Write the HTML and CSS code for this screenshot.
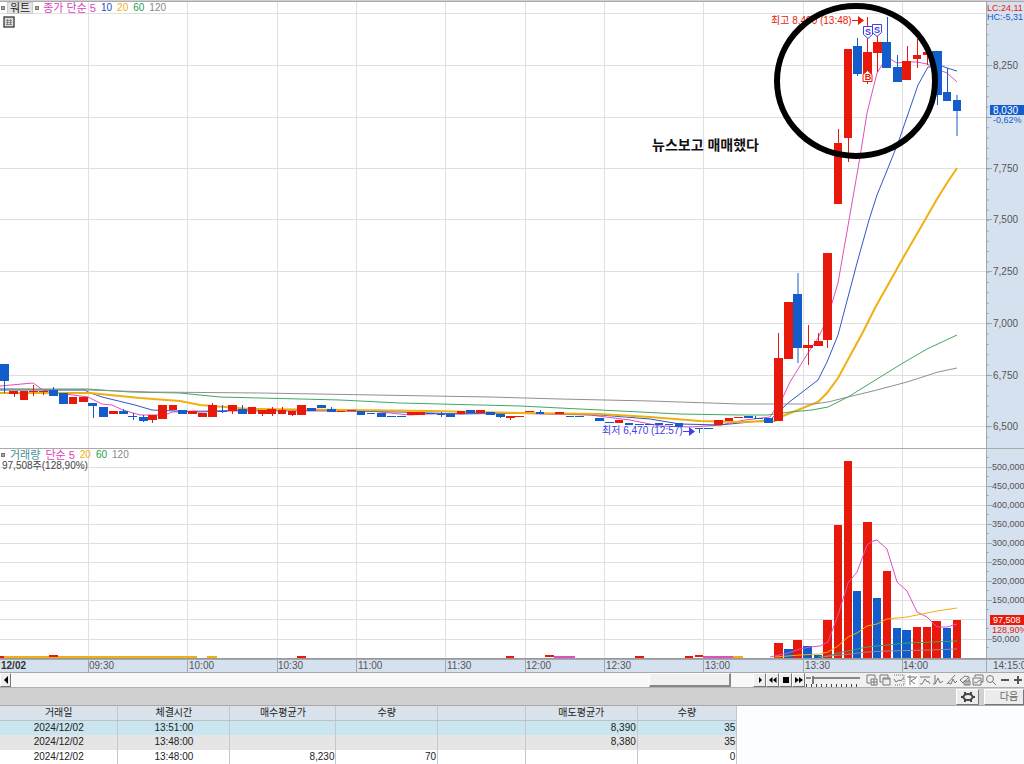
FILE: index.html
```html
<!DOCTYPE html>
<html lang="ko">
<head>
<meta charset="utf-8">
<title>워트 차트</title>
<link rel="stylesheet" href="styles.css">
</head>
<body>
<main class="app">
  <section class="panel price" aria-label="가격 차트">
    <div class="legend">
      <div class="legend-row">
        <i class="mark"></i><button class="symbol" type="button">워트</button><i class="mark"></i>
        <span class="pink">종가 단순 5</span><span class="navy">10</span><span class="gold">20</span><span class="green">60</span><span class="gray">120</span>
      </div>
      <button class="grid-button" type="button" aria-label="표 보기">
        <svg viewBox="0 0 12 12"><rect x="1" y="1" width="10" height="10" fill="#ddd" stroke="#444" stroke-width="1.4"/><path d="M3 4.5h6M3 6.5h6M3 8.5h6M4.5 3v6M7.5 3v6" stroke="#777" stroke-width=".8"/></svg>
      </button>
    </div>
    <svg class="plot" viewBox="0 0 1024 449">
      <rect width="1024" height="449" fill="#fff"/>
      <path class="grid" d="M0 13.5H986M0 65.500H986M0 117.500H986M0 168.500H986M0 219.500H986M0 271.500H986M0 323.500H986M0 375.500H986M0 426.500H986M88.500 2V449M187.500 2V449M277.500 2V449M356.500 2V449M445.500 2V449M525.500 2V449M604.500 2V449M703.500 2V449M803.500 2V449M902.500 2V449"/>
      <rect x="986" width="38" height="449" fill="#d6e1f0"/>
      <path class="axis" d="M986.500 2V449M987 65.500h5M987 117.500h5M987 168.500h5M987 219.500h5M987 271.500h5M987 323.500h5M987 375.500h5M987 426.500h5"/>
      <path d="M987.500 24V447" stroke="#999" stroke-width="2" stroke-dasharray="1 9.320"/>
      <polyline class="line s-pink" points="0,386 33,383 43,390 58,393 88,397 102,404 112,405 123,410 140,415 165,415 172,412 195,411 240,411 300,411 370,411 390,413 410,415 428,414 500,413 590,415 630,420 660,426 690,427 720,425 745,420 770,417 783,397 790,382 808,353 818,338 823,328 832,303 838,283 849,220 860,157 867,113 877,73 885,60 892,60 897,63 907,62 917,62 927,64 942,71 947,73 957,82"/>
      <polyline class="line s-navy" points="0,390 85,390 88,392 102,397 135,405 152,410 200,412 240,410 300,410 400,412 460,414 520,413 600,415 650,419 680,424 720,425 770,420 788,403 818,380 827,362 838,335 857,263 869,220 877,195 888,168 898,143 907,117 918,85 928,67 942,66 947,68 957,71"/>
      <polyline class="line s-gold thick" points="0,393 90,393 140,398 180,401 200,405 250,409 350,410 430,411 520,413 600,414 650,417 700,421 740,422 775,421 783,416 818,402 827,393 838,378 863,332 875,308 903,258 925,220 937,199 947,183 957,168"/>
      <polyline class="line s-green" points="0,389 88,389 130,392 180,393 220,397 260,398 340,400 400,403 480,405 520,406 580,409 640,412 680,414 740,415 768,415 790,412 812,410 828,407 848,397 877,379 903,363 927,349 957,335"/>
      <polyline class="line s-gray" points="0,389 88,390 150,392 260,393 375,395 490,397 560,399 650,401 740,404 800,404 813,404 828,402 848,397 873,391 907,382 938,372 957,368"/>
      <path class="up-wick" d="M14.500 391V397M33.500 385V396M43.500 391V395M152.500 415V423M212.500 403V416M232.500 405V414M262.500 410V416M272.500 407V416M282.500 407V414M292.500 411V416M510.500 416V420M778.500 333V420M808.500 325V365M818.500 333V346M827.500 253V348M838.500 129V203M848.500 49V162M867.500 17V84M877.500 36V72M907.500 46V80M917.500 39V68M927.500 50V65"/>
      <path class="down-wick" d="M4.500 365V393M53.500 387V395M93.500 403V418M123.500 409V414M133.500 413V420M143.500 415V422M222.500 405V413M242.500 405V414M331.500 407V412M441.500 412V417M500.500 414V418M540.500 410V414M699.500 428V433M755.500 416V418M798 273V363M857.500 38V76M887.500 17V68M897.500 55V82M937.500 51V105M947.500 68V101M957 95V136"/>
      <path class="up" d="M9 391h9v3h-9zM20 391h8v9h-8zM29 391h9v1h-9zM39 391h9v1h-9zM69 397h8v7h-8zM79 397h9v5h-9zM109 411h9v3h-9zM148 415h9v5h-9zM158 405h9v14h-9zM169 405h8v5h-8zM188 411h9v3h-9zM198 413h9v4h-9zM208 405h9v12h-9zM228 405h9v6h-9zM248 407h8v7h-8zM258 410h9v4h-9zM267 409h9v5h-9zM278 410h8v4h-8zM288 411h8v4h-8zM297 405h9v10h-9zM337 411h8v1h-8zM347 410h9v1h-9zM407 412h9v3h-9zM416 412h9v3h-9zM457 411h8v3h-8zM476 410h9v3h-9zM506 416h9v2h-9zM515 416h9v1h-9zM525 411h9v1h-9zM555 412h9v2h-9zM615 420h8v3h-8zM714 420h9v5h-9zM725 418h8v3h-8zM734 417h9v1h-9zM774 358h9v63h-9zM784 302h9v57h-9zM803 345h10v3h-10zM814 341h9v5h-9zM823 253h9v87h-9zM834 143h8v61h-8zM844 49h8v89h-8zM863 52h9v23h-9zM873 42h9v11h-9zM902 61h9v19h-9zM913 55h8v4h-8zM923 52h8v3h-8z"/>
      <path class="down" d="M0 364h9v17h-9zM49 390h9v6h-9zM59 393h9v11h-9zM88 403h9v3h-9zM99 407h9v10h-9zM119 411h9v3h-9zM128 416h9v1h-9zM139 417h9v4h-9zM178 410h9v4h-9zM218 411h9v1h-9zM238 409h9v5h-9zM307 408h9v3h-9zM317 405h9v3h-9zM327 409h9v3h-9zM357 411h8v4h-8zM367 413h8v1h-8zM377 413h9v4h-9zM387 416h9v1h-9zM397 416h9v1h-9zM426 413h9v1h-9zM437 414h8v1h-8zM446 414h9v3h-9zM466 410h9v3h-9zM486 412h9v3h-9zM496 414h9v3h-9zM536 412h8v2h-8zM566 416h8v1h-8zM575 416h9v1h-9zM595 418h9v3h-9zM605 422h9v1h-9zM625 423h8v2h-8zM635 424h9v1h-9zM645 424h9v1h-9zM655 423h8v2h-8zM665 424h8v1h-8zM675 423h8v4h-8zM695 428h8v1h-8zM704 428h9v1h-9zM744 416h9v2h-9zM754 418h9v1h-9zM764 418h9v5h-9zM793 294h9v54h-9zM853 46h9v28h-9zM882 42h9v26h-9zM893 67h9v15h-9zM932 51h10v44h-10zM943 92h8v9h-8zM953 100h8v11h-8z"/>
      <text class="red" x="771" y="24">최고 8,490 (13:48)</text>
      <path d="M852 20.500h8" stroke="#e8190a"/><path d="M858 16l6 4.500-6 4.500z" fill="#e8190a"/>
      <g fill="#fff" stroke="#4040e8"><path d="M863.500 26.500h9v8l-4.500 4-4.500-4zM872.500 24.500h9v8l-4.500 4-4.500-4z"/></g>
      <path d="M867.500 70.500l4.500 4v7h-9v-7z" fill="#fff" stroke="#e8190a"/>
      <g class="flag"><text x="868" y="35">S</text><text x="877" y="33">S</text><text class="red" x="868" y="80">B</text></g>
      <ellipse cx="856" cy="81" rx="79" ry="75" fill="none" stroke="#000" stroke-width="6"/>
      <text class="blue" x="602" y="434">최저 6,470 (12:57)</text>
      <path d="M683 431.500h7" stroke="#4040e8"/><path d="M689 427l6 4.500-6 4.500z" fill="#4040e8"/>
      <text class="note" x="652" y="150">뉴스보고 매매했다</text>
      <g class="ticks"><text x="993" y="69">8,250</text><text x="993" y="172">7,750</text><text x="993" y="223">7,500</text><text x="993" y="275">7,250</text><text x="993" y="327">7,000</text><text x="993" y="379">6,750</text><text x="993" y="430">6,500</text></g>
      <g class="small"><text class="red" x="987" y="11">LC:24,11</text><text class="fall" x="987" y="20">HC:-5,31</text></g>
      <rect x="990" y="105" width="34" height="10" fill="#125ccc"/><text class="on" x="993" y="114">8,030</text><g class="small"><text class="fall" x="993" y="123">-0,62%</text></g>
      <path d="M0 448.500H1024" stroke="#aaa"/><path d="M0 .5H1024" stroke="#d0d0d0" stroke-width="2"/><path d="M0 1.500H1024" stroke="#aaa"/>
    </svg>
  </section>

  <section class="panel volume" aria-label="거래량 차트">
    <div class="legend">
      <div class="legend-row">
        <i class="mark"></i><span class="teal">거래량</span><span class="pink">단순 5</span><span class="gold">20</span><span class="green">60</span><span class="gray">120</span>
      </div>
      <div class="amount">97,508주(128,90%)</div>
    </div>
    <svg class="plot" viewBox="0 449 1024 210">
      <rect y="449" width="1024" height="210" fill="#fff"/>
      <path class="grid" d="M0 467.500H986M0 486.500H986M0 505.500H986M0 524.500H986M0 543.500H986M0 562.500H986M0 581.500H986M0 600.500H986M0 619.500H986M0 639.500H986M88.500 449V658M187.500 449V658M277.500 449V658M356.500 449V658M445.500 449V658M525.500 449V658M604.500 449V658M703.500 449V658M803.500 449V658M902.500 449V658"/>
      <rect x="986" y="449" width="38" height="210" fill="#d6e1f0"/>
      <path class="axis" d="M986.500 449V659M987 467.500h5M987 486.500h5M987 505.500h5M987 524.500h5M987 543.500h5M987 562.500h5M987 581.500h5M987 600.500h5M987 639.500h5"/>
      <path d="M987.500 457V655" stroke="#999" stroke-width="2" stroke-dasharray="1 18"/>
      <path d="M0 658.500H1024" stroke="#999"/>
      <path class="base s-gold" d="M0 657H197M207 657H217M733 657H743"/>
      <path class="base s-red" d="M0 657H4M49 656h9M297 657h9M506 657h8M545 656h9M635 657h9M685 657h8M695 656h8"/>
      <path class="base s-pink" d="M554 657H575M703 657H733"/>
      <path class="up" d="M774 643h9v15h-9zM793 640h9v18h-9zM823 620h9v38h-9zM834 525h8v133h-8zM844 461h8v197h-8zM863 522h9v136h-9zM883 571h8v87h-8zM913 627h8v31h-8zM923 627h8v31h-8zM932 621h9v37h-9zM953 620h8v38h-8z"/>
      <path class="down" d="M784 649h9v9h-9zM803 646h9v12h-9zM814 655h8v3h-8zM853 591h8v67h-8zM873 598h8v60h-8zM893 628h8v30h-8zM902 630h9v28h-9zM943 628h8v30h-8z"/>
      <polyline class="line s-pink" points="770,657 788,653 800,649 810,647 820,646 828,642 838,615 848,583 857,572 867,545 873,541 877,540 887,549 897,582 907,591 917,612 927,617 937,627 947,627 957,624"/>
      <polyline class="line s-gold" points="775,657 800,655 820,654 828,652 838,646 848,637 857,633 867,626 877,624 887,619 907,617 922,614 937,611 957,608"/>
      <polyline class="line s-green" points="818,657 828,656 838,653 848,651 867,647 887,645 907,643 932,642 957,641"/>
      <polyline class="line s-gray" points="820,657 840,655 867,652 887,651 930,650 957,649"/>
      <g class="ticks small"><text x="992" y="470">500,000</text><text x="992" y="489">450,000</text><text x="992" y="508">400,000</text><text x="992" y="527">350,000</text><text x="992" y="546">300,000</text><text x="992" y="565">250,000</text><text x="992" y="584">200,000</text><text x="992" y="603">150,000</text><text x="992" y="642">50,000</text></g>
      <rect x="990" y="615" width="34" height="10" fill="#e8190a"/><g class="small"><text class="on" x="993" y="623">97,508</text><text class="red" x="992" y="633">128,90%</text></g>
    </svg>
  </section>

  <svg class="plot" viewBox="0 659 1024 14" aria-label="시간축">
    <rect y="659" width="1024" height="14" fill="#d6e1f0"/>
    <path class="axis" d="M88.500 660V673M187.500 660V673M277.500 660V673M356.500 660V673M445.500 660V673M525.500 660V673M604.500 660V673M703.500 660V673M803.500 660V673M902.500 660V673M986.500 660V673M0 659.500H1024M0 672.500H1024"/>
    <g class="ticks"><text class="date" x="1" y="669">12/02</text><text x="89" y="669">09:30</text><text x="189" y="669">10:00</text><text x="278" y="669">10:30</text><text x="358" y="669">11:00</text><text x="447" y="669">11:30</text><text x="526" y="669">12:00</text><text x="606" y="669">12:30</text><text x="705" y="669">13:00</text><text x="805" y="669">13:30</text><text x="903" y="669">14:00</text><text x="993" y="669">14:15:00</text></g>
  </svg>

  <div class="controls">
    <button class="key" type="button" aria-label="왼쪽으로"><svg viewBox="0 0 12 12"><path d="M8 2v8L4 6z"/></svg></button>
    <div class="track"><div class="thumb"></div></div>
    <button class="key" type="button" aria-label="오른쪽으로"><svg viewBox="0 0 12 12"><path d="M5 3v6l3-3z"/></svg></button>
    <button class="key" type="button" aria-label="뒤로"><svg viewBox="0 0 12 12"><path d="M5.500 3v6L2 6zM9.500 3v6L6 6z"/></svg></button>
    <button class="key" type="button" aria-label="정지"><svg viewBox="0 0 12 12"><path d="M3 3h6v6H3z"/></svg></button>
    <button class="key" type="button" aria-label="앞으로"><svg viewBox="0 0 12 12"><path d="M2 3v6l4-3zM6 3v6l4-3z"/></svg></button>
    <input class="speed" type="range" min="0" max="10" value="1" aria-label="속도">
    <div class="tools">
      <button type="button" aria-label="차트 추가"><svg viewBox="0 0 12 12"><path d="M4 9H1V1h8v3M5 5h6v6H5zM8 5v6M5 8h6"/></svg></button>
      <button type="button" aria-label="창 복사"><svg viewBox="0 0 12 12"><path d="M3 8H1V1h8v3M4 4h7v7H4zM4 5h7"/></svg></button>
      <button type="button" aria-label="영역"><svg viewBox="0 0 12 12"><path d="M1 1h10v10H1" stroke-dasharray="1 1"/><path d="M1 5l2 3 3-2 2 1 3-4"/></svg></button>
      <button class="on-tool" type="button" aria-label="추세"><svg viewBox="0 0 12 12"><path d="M1 3h10M4 1v10M10 4L5 7l4 3"/></svg></button>
      <button type="button" aria-label="수평선"><svg viewBox="0 0 12 12"><path d="M1 3h10M1 10h2l3-5 2 3 1-1 2 3"/></svg></button>
      <button type="button" aria-label="수직선"><svg viewBox="0 0 12 12"><path d="M3 1v9M1 10h2l3-6 2 5 3-2"/></svg></button>
      <button type="button" aria-label="추세선"><svg viewBox="0 0 12 12"><path d="M1 10L9 1M2 9l3 1 2-5 2 4 2-2"/></svg></button>
      <button type="button" aria-label="지우기"><svg viewBox="0 0 12 12"><path d="M1 6l5-4 4 1v4M1 6l3 3 5-5M5 7h6v4H5zM7 7v4M9 7v4"/></svg></button>
      <button type="button" aria-label="겹쳐보기"><svg viewBox="0 0 12 12"><path d="M3 3V1h8v7H9M1 4h8v7H1zM2 8l2 1 4-3"/></svg></button>
      <button type="button" aria-label="돋보기"><svg viewBox="0 0 12 12"><circle cx="5" cy="5" r="3.500"/><path d="M7.500 7.500L11 11"/></svg></button>
      <button type="button" aria-label="축소"><svg viewBox="0 0 12 12"><path d="M2 6h8" stroke="#555" stroke-width="2"/></svg></button>
      <button type="button" aria-label="확대"><svg viewBox="0 0 12 12"><path d="M2 6h8M6 2v8" stroke="#555" stroke-width="2"/></svg></button>
    </div>
  </div>

  <div class="actions">
    <button class="action gear" type="button" aria-label="설정"><svg viewBox="0 0 16 12"><ellipse cx="8" cy="6" rx="4.500" ry="3" fill="none" stroke="#444" stroke-width="2"/><path d="M5 1v2M11 1v2M5 9v2M11 9v2M1 6h2M13 6h2" stroke="#444" stroke-width="2"/></svg></button>
    <button class="action next" type="button">다음</button>
  </div>

  <div class="trades">
    <table>
      <colgroup><col class="c-date"><col class="c-time"><col class="c-buy"><col class="c-qty"><col class="c-gap"><col class="c-time"><col class="c-last"></colgroup>
      <thead><tr><th>거래일</th><th>체결시간</th><th>매수평균가</th><th>수량</th><th></th><th>매도평균가</th><th>수량</th></tr></thead>
      <tbody>
        <tr class="selected"><td class="mid">2024/12/02</td><td class="mid">13:51:00</td><td></td><td></td><td></td><td>8,390</td><td>35</td></tr>
        <tr class="alt"><td class="mid">2024/12/02</td><td class="mid">13:48:00</td><td></td><td></td><td></td><td>8,380</td><td>35</td></tr>
        <tr><td class="mid">2024/12/02</td><td class="mid">13:48:00</td><td>8,230</td><td>70</td><td></td><td></td><td>0</td></tr>
      </tbody>
    </table>
  </div>
</main>
</body>
</html>
```

FILE: styles.css
```css
* { box-sizing: border-box; }
body {
  margin: 0;
  background: #fff;
  color: #222;
  font: 10px/12px "Liberation Sans", "Noto Sans CJK KR", sans-serif;
}
button { font: inherit; color: inherit; padding: 0; cursor: pointer; }
.app { display: flex; flex-direction: column; height: 100vh; overflow: hidden; }
.panel { position: relative; flex: none; }
.plot { display: block; flex: none; width: 100%; height: auto; }
.plot text { font-size: 10px; fill: #555; }
.plot .small text { font-size: 9px; }

.legend { position: absolute; left: 1px; top: 2px; }
.volume .legend { top: 0; }
.legend-row { display: flex; align-items: center; gap: 5px; height: 12px; }
.mark { width: 4px; height: 4px; border: 1px solid #777; background: #aaa; margin-right: -3px; }
.volume .mark { margin-right: 0; }
.symbol { height: 12px; padding: 0 2px; border: 1px solid #ccc; background: #e4e4e4; line-height: 10px; margin-right: -3px; }
.legend-row .pink, .teal, .symbol { font-size: 11px; }
.price .pink { margin-left: 2px; }
.grid-button { display: block; width: 12px; height: 12px; margin: 2px 0 0 2px; border: 0; background: none; }
.grid-button svg { display: block; }
.amount { color: #444; height: 10px; line-height: 10px; margin-left: 1px; }

.pink { color: #e040c0; }
.navy { color: #2848c0; }
.gold { color: #f0b010; }
.green { color: #20a050; }
.gray { color: #888; }
.teal { color: #409098; }

.grid { stroke: #e0e0e0; }
.axis { stroke: #a4a8b0; }
.up { fill: #e8190a; }
.down { fill: #125ccc; }
.up-wick { stroke: #e8190a; }
.down-wick { stroke: #125ccc; }
.line { fill: none; stroke-width: 1; }
.base { fill: none; stroke-width: 2; }
.thick { stroke-width: 2; }
.s-pink { stroke: #e050c0; }
.s-navy { stroke: #3058c8; }
.s-gold { stroke: #f0b010; }
.s-green { stroke: #40a860; }
.s-gray { stroke: #909090; }
.s-red { stroke: #e8190a; }
.plot .red { fill: #e8190a; }
.plot .blue { fill: #4040e8; }
.plot .fall { fill: #125ccc; }
.plot .on { fill: #fff; }
.plot .note { fill: #111; font-size: 14px; font-weight: 700; }
.plot .date { fill: #333; font-weight: 700; }
.flag text { font-size: 9px; font-weight: 700; text-anchor: middle; fill: #4040e8; }

.controls { display: flex; flex: none; height: 14px; background: #f0f0f0; }
.key { width: 13px; border: 1px solid #fff; border-right-color: #777; border-bottom-color: #777; background: #eee; display: flex; align-items: center; justify-content: center; }
.key svg { width: 12px; height: 12px; flex: none; }
.key:first-child { width: 11px; }
.track { flex: 1; background: #f8f8f8; }
.thumb { height: 14px; width: 11%; margin-left: 86%; border: 1px solid #fff; border-right: 2px solid #888; border-bottom: 2px solid #888; background: #f0f0f0; }
.speed {
  appearance: none; width: 54px; height: 14px; margin: 0 6px 0 1px;
  background: linear-gradient(#888, #888) 0 4px / 100% 2px no-repeat,
    repeating-linear-gradient(90deg, #444 0 1px, transparent 1px 5px) 0 11px / 100% 3px no-repeat;
}
.speed::-webkit-slider-thumb { appearance: none; width: 3px; height: 8px; background: #777; border-left: 1px solid #fff; }
.tools { display: flex; justify-content: space-between; align-items: center; width: 158px; }
.tools button { width: 12px; height: 13px; border: 0; background: none; }
.tools .on-tool { background: #fff; }
.tools svg { display: block; width: 12px; height: 12px; fill: none; stroke: #777; }

.actions { display: flex; flex: none; justify-content: flex-end; gap: 5px; height: 19px; padding-top: 1px; background: #d0d0d0; border-top: 1px solid #b0b0b0; border-bottom: 1px solid #a8a8a8; }
.action { height: 16px; border: 1px solid #fff; border-right-color: #777; border-bottom-color: #777; background: #ececec; }
.gear { width: 23px; display: flex; align-items: center; justify-content: center; }
.gear svg { width: 16px; height: 12px; }
.next { width: 40px; padding-left: 10px; color: #666; }

.trades { flex: 1; min-height: 0; overflow: hidden; background: #fcfdff; }
table { width: 72%; border-collapse: collapse; table-layout: fixed; }
.c-date { width: 16%; }
.c-time { width: 15.200%; }
.c-buy { width: 14.400%; }
.c-qty { width: 13.800%; }
.c-gap { width: 11.900%; }
th, td { height: 15px; padding: 0 1px; line-height: 13px; border-right: 1px solid #c4c8cc; text-align: right; vertical-align: top; white-space: nowrap; }
th { height: 14px; background: #dae2ec; font-weight: 400; text-align: center; border-bottom: 1px solid #c0c0c0; }
.mid { text-align: center; }
tbody tr { background: #fff; }
tbody .selected { background: #c8e5f0; }
tbody .alt { background: #e5e5e5; }
```
